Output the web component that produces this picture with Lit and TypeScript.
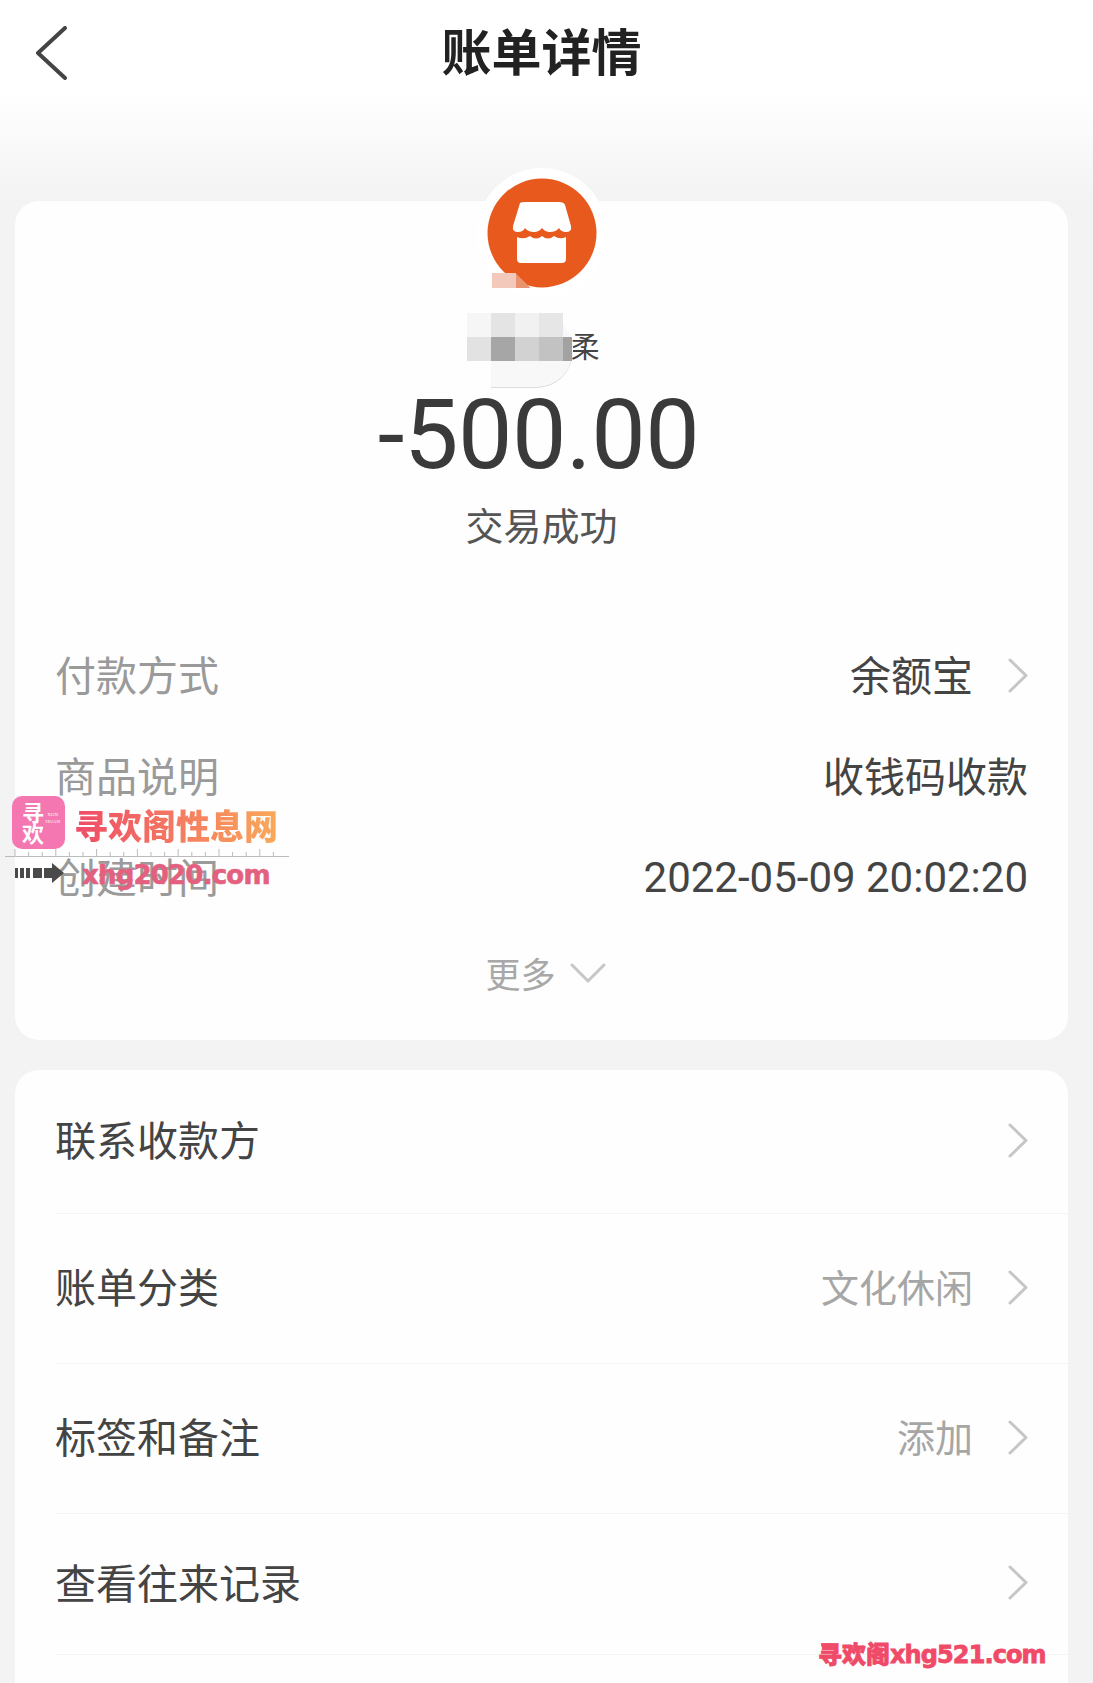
import { LitElement, html, css, svg } from "lit";
import { customElement } from "lit/decorators.js";

const chev = html`<svg class="chev" viewBox="0 0 20 35"><path d="M2 2 L18 17.5 L2 33" /></svg>`;

const pixels: [string, number, number][] = [
  ["#f6f6f6", 0, 0], ["#e4e4e4", 1, 0], ["#f1f1f1", 2, 0], ["#e6e6e6", 3, 0],
  ["#e2e2e2", 0, 1], ["#a6a6a6", 1, 1], ["#d2d2d2", 2, 1], ["#c2c2c2", 3, 1],
];

@customElement("app-root")
export class AppRoot extends LitElement {
  static styles = css`
    :host {
      display: block;
      position: relative;
      height: 1683px;
      overflow: hidden;
      background: linear-gradient(#fff 0, #fff 95px, #f3f3f3 200px);
      font-family: "Noto Sans CJK SC", "Liberation Sans", sans-serif;
      color: #333;
    }
    .nav {
      height: 201px;
      box-sizing: border-box;
      padding: 26px 0 0 36px;
      position: relative;
    }
    .back { width: 32px; height: 54px; display: block; fill: none; stroke: #444; stroke-width: 4; stroke-linecap: round; stroke-linejoin: round; }
    .title {
      position: absolute;
      left: 0; right: 10px; top: 19px;
      text-align: center;
      font-size: 50px;
      line-height: 60px;
      font-weight: 700;
      color: #222;
    }
    .card {
      margin: 0 25px 30px 15px;
      background: #fefefe;
      border-radius: 24px;
    }
    .summary { height: 839px; box-sizing: border-box; display: flex; flex-direction: column; align-items: stretch; }
    .badge {
      align-self: center;
      margin-top: -33px;
      width: 130px; height: 130px;
      border-radius: 50%;
      background: #fff;
      display: flex; align-items: center; justify-content: center;
      flex: none;
      position: relative;
    }
    .badge svg { width: 110px; height: 110px; display: block; }
    .badge .p1 { position: absolute; left: 15px; top: 105px; width: 24px; height: 15px; background: #f2c9ba; }
    .badge .p2 { position: absolute; left: 39px; top: 105px; width: 15px; height: 15px; background: #e9946f; clip-path: polygon(0 0, 100% 100%, 0 100%); }
    .name {
      height: 102px;
      box-sizing: border-box;
      padding: 0 16px 8px 0;
      display: flex; align-items: center; justify-content: center;
      font-size: 29px;
      color: #444;
    }
    .mosaic {
      position: relative;
      z-index: 1;
      width: 103px; height: 80px;
      margin-top: 16px;
      flex: none;
    }
    .mosaic .shade { position: absolute; left: 24px; top: 0; width: 82px; height: 74px; background: #f8f8f8; border-radius: 0 40px 40px 0 / 0 40px 40px 0; box-shadow: 0 1px 0 #dcdcdc; }
    .mosaic i { position: absolute; width: 24px; height: 24px; display: block; }
    .mosaic .tail { position: absolute; left: 96px; top: 24px; width: 9px; height: 24px; background: #a2a2a2; }
    .amount {
      height: 66px;
      margin-top: 2px;
      padding-right: 6px;
      line-height: 66px;
      text-align: center;
      font-family: Roboto, "Liberation Sans", sans-serif;
      font-size: 97px;
      letter-spacing: -0.5px;
      color: #3a3a3a;
      flex: none;
    }
    .status {
      height: 112px;
      line-height: 112px;
      margin-bottom: 45px;
      text-align: center;
      font-size: 38px;
      color: #555;
      flex: none;
    }
    .info {
      height: 101px;
      flex: none;
      box-sizing: border-box;
      padding: 0 40px;
      display: flex; align-items: center; justify-content: space-between;
      font-size: 41px;
    }
    .info .k { color: #9a9a9a; margin-bottom: 6px; }
    .info .v { color: #444; display: flex; align-items: center; margin-bottom: 6px; }
    .info .time { font-family: Roboto, "Liberation Sans", sans-serif; font-size: 42px; margin-bottom: 0; }
    .chev { width: 20px; height: 35px; margin: 6px 0 0 35px; display: block; fill: none; stroke: #c6c6c6; stroke-width: 3; stroke-linecap: round; stroke-linejoin: round; flex: none; }
    .more {
      height: 90px;
      display: flex; align-items: center; justify-content: center; gap: 14px;
      padding-left: 8px;
      font-size: 35px;
      color: #a8a8a8;
    }
    .more span { margin-bottom: 2px; }
    .more svg { width: 36px; height: 20px; fill: none; stroke: #c6c6c6; stroke-width: 3; stroke-linecap: round; stroke-linejoin: round; }
    .list { border-bottom-left-radius: 0; border-bottom-right-radius: 0; height: 640px; margin-bottom: 0; }
    .row {
      margin-left: 40px;
      padding-right: 40px;
      height: 150px;
      box-sizing: border-box;
      border-bottom: 1px solid #f4f4f4;
      display: flex; align-items: center; justify-content: space-between;
      font-size: 41px;
      color: #444;
    }
    .row:first-child { height: 144px; }
    .row:last-child { height: 141px; }
    .row .t { margin-bottom: 7px; }
    .row .v { display: flex; align-items: center; color: #a6a6a6; font-size: 38px; margin-bottom: 7px; }
    .row .chev { margin-top: 4px; }
    .wm { position: absolute; left: 5px; top: 796px; width: 284px; height: 92px; }
    .logo {
      position: absolute; left: 7px; top: 0;
      width: 53px; height: 53px;
      border-radius: 10px;
      background: #f477b1;
      color: #fff;
      font-size: 22px;
      line-height: 21px;
      font-weight: 700;
      box-sizing: border-box;
      padding: 5px 0 0 10px;
    }
    .logo b { display: block; font-weight: 700; }
    .logo small { position: absolute; right: 5px; top: 15px; font: 5px/7px "Liberation Serif", serif; text-align: center; }
    .wm-title {
      position: absolute; left: 69px; top: 9px;
      font-size: 34px; line-height: 40px; font-weight: 900; white-space: nowrap;
      background: linear-gradient(90deg, #ef4a68, #f9a95a);
      -webkit-background-clip: text; background-clip: text;
      color: transparent;
    }
    .ruler { position: absolute; left: 0; top: 52px; width: 284px; height: 9px; display: block; }
    .arrow { position: absolute; left: 10px; top: 67px; width: 49px; height: 20px; display: block; }
    .wm-url {
      position: absolute; left: 77px; top: 63px;
      font-family: "DejaVu Sans", sans-serif;
      font-weight: 700; font-size: 26px; line-height: 32px;
      letter-spacing: -0.8px;
      color: #e4607f;
      -webkit-text-stroke: 0.6px #e4607f;
      white-space: nowrap;
    }
    .wm2 {
      position: absolute; left: 818px; top: 1638px;
      font-size: 24px; line-height: 30px; font-weight: 900;
      color: #ef4a68;
      -webkit-text-stroke: 0.8px #ef4a68;
      white-space: nowrap;
    }
    .wm2 span { font-family: "DejaVu Sans", sans-serif; font-weight: 700; letter-spacing: -0.9px; font-size: 24px; }
  `;

  render() {
    return html`
      <div class="nav">
        <svg class="back" viewBox="0 0 32 54"><path d="M29 2 L2 27 L29 52" /></svg>
        <div class="title">账单详情</div>
      </div>

      <section class="card summary">
        <div class="badge">
          <svg viewBox="0 0 110 110">
            <circle cx="55" cy="55" r="54.5" fill="#e8591e" />
            <path d="M33 25 Q34 24 38 24 H72 Q77 24 78 27 L84 48 Q85 54 79 54 Q74 54 72 50 Q69 54 63 54 Q58 54 55 50 Q52 54 47 54 Q41 54 38 50 Q36 54 31 54 Q25 54 26 48 Z" fill="#fff" />
            <path d="M30 59 Q37 62 43 58 Q49 63 55 58 Q61 63 67 58 Q73 62 79 59 V81 Q79 85 75 85 H34 Q30 85 30 81 Z" fill="#fff" />
          </svg>
          <span class="p1"></span><span class="p2"></span>
        </div>
        <div class="name">
          <div class="mosaic">
            <div class="shade"></div>
            ${pixels.map(
              ([c, x, y]) => html`<i style="left:${x * 24}px;top:${y * 24}px;background:${c}"></i>`
            )}
            <div class="tail"></div>
          </div>
          <span>柔</span>
        </div>
        <div class="amount">-500.00</div>
        <div class="status">交易成功</div>
        <div class="info"><span class="k">付款方式</span><span class="v">余额宝${chev}</span></div>
        <div class="info"><span class="k">商品说明</span><span class="v">收钱码收款</span></div>
        <div class="info"><span class="k">创建时间</span><span class="v time">2022-05-09 20:02:20</span></div>
        <div class="more"><span>更多</span><svg viewBox="0 0 36 20"><path d="M2 2 L18 18 L34 2" /></svg></div>
      </section>

      <section class="card list">
        <div class="row"><span class="t">联系收款方</span><span class="v">${chev}</span></div>
        <div class="row"><span class="t">账单分类</span><span class="v">文化休闲${chev}</span></div>
        <div class="row"><span class="t">标签和备注</span><span class="v">添加${chev}</span></div>
        <div class="row"><span class="t">查看往来记录</span><span class="v">${chev}</span></div>
      </section>

      <div class="wm">
        <div class="logo"><b>寻</b><b>欢</b><small>XUN<br />HUAN</small></div>
        <div class="wm-title">寻欢阁性息网</div>
        <svg class="ruler" viewBox="0 0 284 9">
          <path d="M0 8.5 H284" stroke="#bbb" fill="none" />
          ${Array.from({ length: 20 }, (_, i) =>
            svg`<path d="M${10 + i * 13.6} ${i % 3 === 0 ? 1 : 4} V8" stroke="#bbb" fill="none" />`
          )}
        </svg>
        <svg class="arrow" viewBox="0 0 49 20">
          <path d="M0 5 H3 V15 H0 Z M5 5 H9 V15 H5 Z M11 5 H15 V15 H11 Z M18 5 H27 V15 H18 Z M29 5 H37 V0 L49 10 L37 20 V15 H29 Z" fill="#4a4a4a" />
        </svg>
        <div class="wm-url">xhg2020.com</div>
      </div>
      <div class="wm2">寻欢阁<span>xhg521.com</span></div>
    `;
  }
}
